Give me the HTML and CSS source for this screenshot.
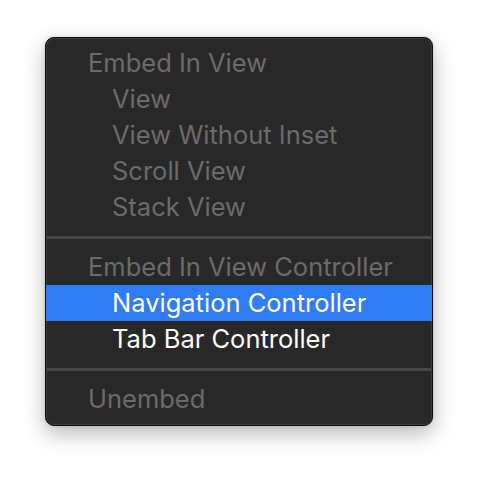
FILE: index.html
```html
<!DOCTYPE html>
<html>
<head>
<meta charset="utf-8">
<link rel="stylesheet" href="styles.css">
</head>
<body>
<div class="menu">
  <div class="row header">Embed In View</div>
  <div class="row item disabled">View</div>
  <div class="row item disabled">View Without Inset</div>
  <div class="row item disabled">Scroll View</div>
  <div class="row item disabled">Stack View</div>
  <div class="sep"></div>
  <div class="row header">Embed In View Controller</div>
  <div class="row item selected">Navigation Controller</div>
  <div class="row item">Tab Bar Controller</div>
  <div class="sep"></div>
  <div class="row header">Unembed</div>
</div>
</body>
</html>
```
FILE: styles.css
```css
html, body {
  margin: 0;
  padding: 0;
  background: #ffffff;
}
body {
  width: 478px;
  height: 480px;
  padding-top: 37px;
  padding-left: 45px;
  box-sizing: border-box;
}
.menu {
  width: 388px;
  box-sizing: border-box;
  background: #282828;
  border: 1px solid #0c0c0c;
  border-radius: 9px;
  box-shadow: inset 0 0 0 1px #3d3d3d, 0 8px 22px rgba(0,0,0,0.28), 0 0 4px rgba(0,0,0,0.12);
  padding: 7px 0 8px;
  font-family: Inter, "Noto Sans", sans-serif;
  font-size: 25.5px;
  overflow: hidden;
}
.row {
  height: 36px;
  line-height: 36px;
  white-space: nowrap;
}
.header {
  padding-left: 42px;
  color: #6b6b6b;
}
.item {
  padding-left: 66px;
  color: #ffffff;
}
.disabled {
  color: #6b6b6b;
}
.selected {
  background: #2f7cf6;
}
.sep {
  height: 3px;
  margin: 11px 1px 10px;
  background: #474747;
}
```
